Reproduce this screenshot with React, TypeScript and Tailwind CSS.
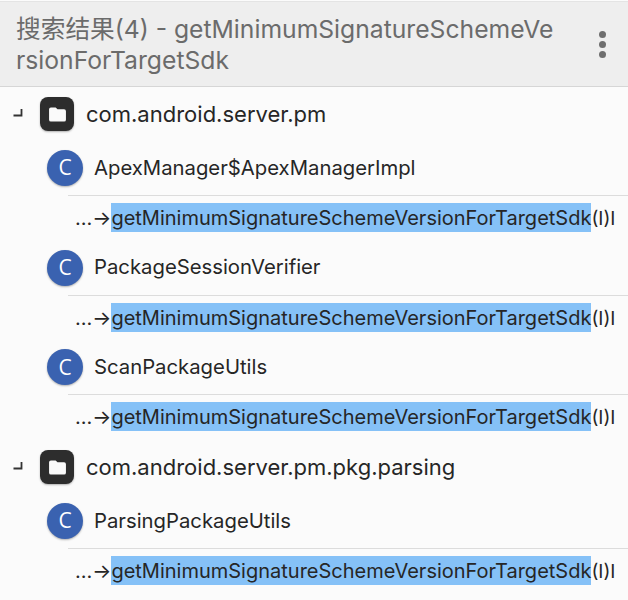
import React from "react";

const font = { fontFamily: "Inter, 'Noto Sans CJK SC', sans-serif" };

function Pkg({ name }: { name: string }) {
  return (
    <div className="flex h-[54px] items-center">
      <svg className="ml-[13px] w-[10px] h-[10px] shrink-0" viewBox="0 0 10 10">
        <path d="M0.5 6.5H8.5V-1" fill="none" stroke="#333" strokeWidth="1.8" />
      </svg>
      <div className="ml-[17px] flex h-[34px] w-[34px] shrink-0 items-center justify-center rounded-[8px] bg-[#2d2d2d] shadow-[0_1px_2px_rgba(0,0,0,0.3)]">
        <svg viewBox="0 0 18 16" className="h-[15px] w-[17px]">
          <path d="M2 0.5H7L9 2.5H16A2 2 0 0 1 18 4.5V13.5A2 2 0 0 1 16 15.5H2A2 2 0 0 1 0 13.5V2.5A2 2 0 0 1 2 0.5Z" fill="#fafafa" />
        </svg>
      </div>
      <span className="ml-[12px] text-[22px] text-[#262626]">{name}</span>
    </div>
  );
}

function Cls({ name }: { name: string }) {
  return (
    <div className="flex h-[54px] items-center pl-[47px]">
      <div className="flex h-[36px] w-[36px] shrink-0 items-center justify-center rounded-full bg-[#3a62b0] text-[21px] text-white shadow-[0_1px_2px_rgba(0,0,0,0.3)]" style={{ fontFamily: "'Open Sans', sans-serif" }}>
        C
      </div>
      <span className="ml-[11px] text-[20.3px] text-[#262626]">{name}</span>
    </div>
  );
}

function Method() {
  return (
    <div className="ml-[68px] flex h-[45.7px] items-start border-t border-[#dcdcdc] pt-[7px] text-[20px] leading-[27px] text-[#262626]">
      <span className="ml-[7px] whitespace-nowrap pt-[2px]">…→</span>
      <span className="whitespace-nowrap bg-[#85c1f7] pt-[2px]">getMinimumSignatureSchemeVersionForTargetSdk</span>
      <span className="whitespace-nowrap pt-[2px] text-[19px]">(I)I</span>
    </div>
  );
}

export default function App() {
  return (
    <div className="h-[600px] w-[628px] overflow-hidden bg-[#fbfbfb]" style={font}>
      <div className="mt-px flex h-[86px] border-y border-t-[#e4e4e4] border-b-[#d6d6d6] bg-[#eeeeee]">
        <div className="w-[558px] break-all pl-[16px] pt-[12px] text-[24.7px] leading-[31px] text-[#6b6b6b]">
          搜索结果(4) - getMinimumSignatureSchemeVersionForTargetSdk
        </div>
        <div className="flex flex-1 flex-col items-center gap-[3px] pt-[29px] pl-[19px]">
          <div className="h-[7px] w-[7px] rounded-full bg-[#6e6e6e]" />
          <div className="h-[7px] w-[7px] rounded-full bg-[#6e6e6e]" />
          <div className="h-[7px] w-[7px] rounded-full bg-[#6e6e6e]" />
        </div>
      </div>
      <Pkg name="com.android.server.pm" />
      <Cls name="ApexManager$ApexManagerImpl" />
      <Method />
      <Cls name="PackageSessionVerifier" />
      <Method />
      <Cls name="ScanPackageUtils" />
      <Method />
      <Pkg name="com.android.server.pm.pkg.parsing" />
      <Cls name="ParsingPackageUtils" />
      <Method />
    </div>
  );
}
